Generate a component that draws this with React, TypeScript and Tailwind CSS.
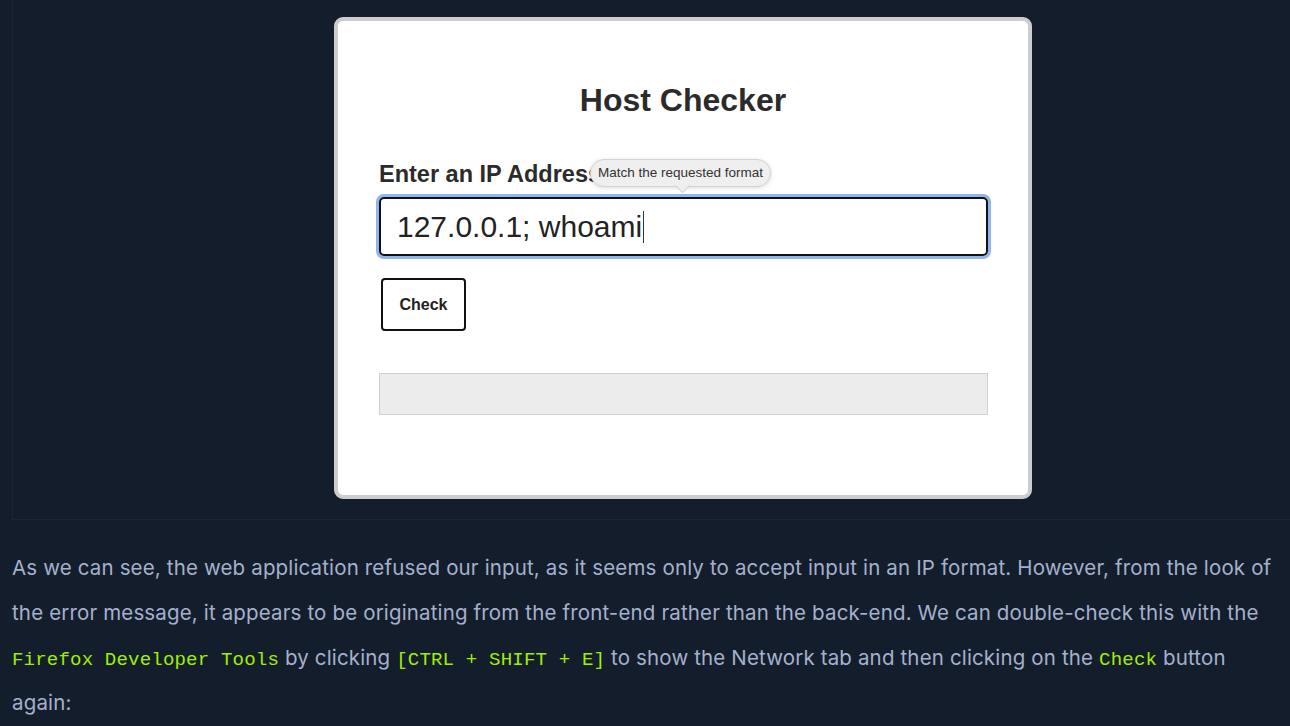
export default function App() {
  const code = "font-['Liberation_Mono',monospace] text-[19.1px] leading-none text-[#9fef00]";

  return (
    <div className="h-[726px] w-[1290px] overflow-hidden bg-[#141d2b] font-['Inter',sans-serif]">
      <div className="ml-[12px] w-[1340px] border-b border-l border-[#1d2636] pt-[17px] pb-[20px] pl-[321px]">
        <div className="h-[482px] w-[698px] rounded-[9px] border-4 border-[#cdcdcd] bg-white font-['Liberation_Sans',Arial,sans-serif] text-[#2b2b2b]">
          <div className="px-[41px]">
            <h1 className="mt-[59px] text-center text-[32px] font-bold leading-[40px]">Host Checker</h1>

            <div className="relative mt-[40px]">
              <label className="block text-[23.5px] font-bold leading-[28px]">Enter an IP Address</label>

              <div className="absolute left-[211px] top-[-1px] z-10">
                <div className="relative rounded-[14px] border border-[#d4d4d4] bg-[#efefef] px-[7px] py-[4px] text-[13.5px] leading-[18px] text-[#333] shadow-[0_1px_4px_rgba(0,0,0,0.15)]">
                  Match the requested format
                  <div className="absolute left-[86px] top-[20px] h-[11px] w-[11px] rotate-45 border-r border-b border-[#d4d4d4] bg-[#efefef]" />
                </div>
              </div>

              <div className="mt-[9px] flex h-[59px] w-[609px] items-center rounded-[5px] border-2 border-[#111] pl-[16px] shadow-[0_0_0_3px_#8fb5ef]">
                <span className="text-[30px] leading-[36px] text-[#222]">127.0.0.1; whoami</span>
                <span className="ml-[1px] h-[32px] w-[1px] bg-[#333]" />
              </div>
            </div>

            <button className="mt-[22px] ml-[2px] h-[53px] w-[85px] rounded-[4px] border-2 border-[#111] text-[16px] font-bold text-[#222]">
              Check
            </button>

            <div className="mt-[42px] h-[42px] w-[609px] border border-[#d0d0d0] bg-[#ececec]" />
          </div>
        </div>
      </div>

      <p className="mt-[25px] whitespace-nowrap px-[12px] text-[20.5px] leading-[45px] tracking-[0.15px] text-[#a4b1cd]">
        As we can see, the web application refused our input, as it seems only to accept input in an IP format. However, from the look of
        <br />
        the error message, it appears to be originating from the front-end rather than the back-end. We can double-check this with the
        <br />
        <span className={code}>Firefox Developer Tools</span> by clicking{" "}
        <span className={code}>[CTRL + SHIFT + E]</span> to show the Network tab and then clicking on the{" "}
        <span className={code}>Check</span> button
        <br />
        again:
      </p>
    </div>
  );
}
